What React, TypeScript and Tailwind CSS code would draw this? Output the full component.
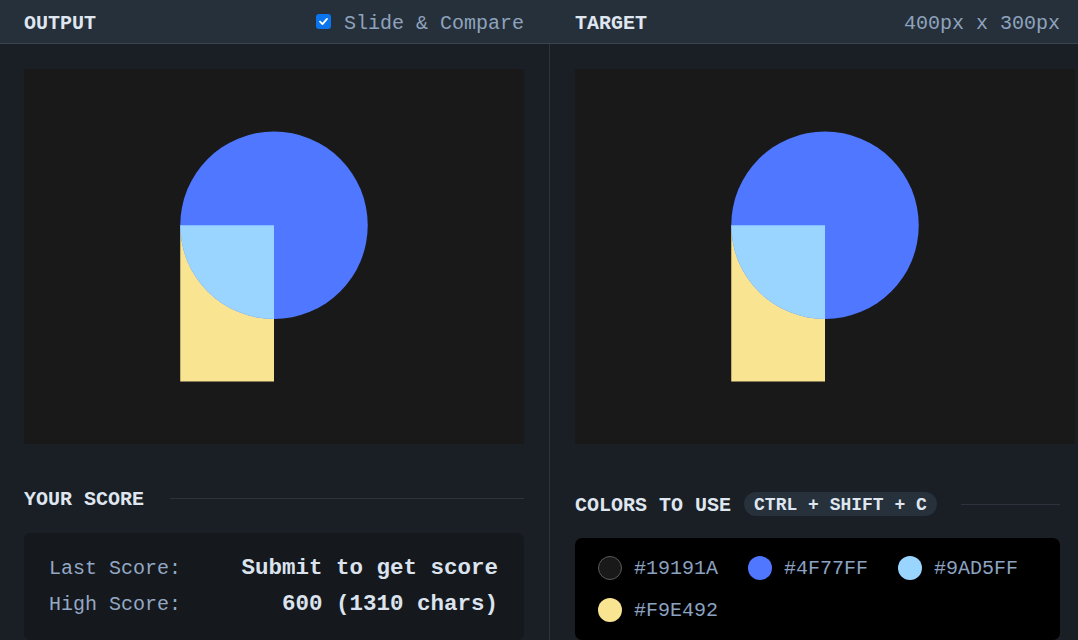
import React from "react";

const mono = { fontFamily: '"Liberation Mono", "DejaVu Sans Mono", monospace' };

function Shapes() {
  return (
    <svg width="500" height="375" viewBox="0 0 400 300" className="block">
      <rect x="0" y="0" width="400" height="300" fill="#19191A" />
      <rect x="125" y="125" width="75" height="125" fill="#F9E492" />
      <circle cx="200" cy="125" r="75" fill="#4F77FF" />
      <path d="M200 125 L125 125 A75 75 0 0 0 200 200 Z" fill="#9AD5FF" />
    </svg>
  );
}

const colors = [
  { hex: "#19191A", border: true },
  { hex: "#4F77FF" },
  { hex: "#9AD5FF" },
  { hex: "#F9E492" },
];

export default function App() {
  return (
    <div className="w-[1078px] h-[640px] overflow-hidden bg-[#1a1e25] flex flex-col" style={mono}>
      <div className="h-[44px] shrink-0 flex bg-[#26303a] border-b border-[#3a4450]">
        <div className="w-[550px] pl-[24px] pr-[26px] flex items-center justify-between">
          <span className="pt-[4px] text-[20px] font-bold text-[#dfe6ef]">OUTPUT</span>
          <div className="flex items-center gap-[13px]">
            <span className="w-[15px] h-[15px] rounded-[3px] bg-[#0b74ef] flex items-center justify-center">
              <svg width="11" height="11" viewBox="0 0 12 12">
                <path d="M2.2 6.2 L4.9 8.8 L9.8 3.2" stroke="white" strokeWidth="2" fill="none" strokeLinecap="round" strokeLinejoin="round" />
              </svg>
            </span>
            <span className="pt-[4px] text-[20px] text-[#8ea3bd]">Slide &amp; Compare</span>
          </div>
        </div>
        <div className="flex-1 pl-[25px] pr-[18px] flex items-center justify-between">
          <span className="pt-[4px] text-[20px] font-bold text-[#dfe6ef]">TARGET</span>
          <span className="pt-[4px] text-[20px] text-[#8ea3bd]">400px x 300px</span>
        </div>
      </div>
      <div className="flex flex-1 min-h-0">
        <div className="w-[549px] shrink-0 pl-[24px] pr-[25px] pt-[25px] flex flex-col">
          <Shapes />
          <div className="mt-[42px] h-[24px] flex items-center gap-[26px]">
            <span className="pt-[4px] text-[20px] font-bold text-[#dfe6ef] whitespace-nowrap">YOUR SCORE</span>
            <div className="flex-1 h-px bg-[#2d343d]" />
          </div>
          <div className="mt-[23px] flex-1 rounded-[7px] bg-[#15181d] pl-[25px] pr-[26px] pt-[18px]">
            <div className="h-[36px] flex items-center justify-between">
              <span className="text-[20px] text-[#93a8c4]">Last Score:</span>
              <span className="text-[22.5px] font-bold text-[#dbe3ee]">Submit to get score</span>
            </div>
            <div className="h-[36px] flex items-center justify-between">
              <span className="text-[20px] text-[#93a8c4]">High Score:</span>
              <span className="text-[22.5px] font-bold text-[#dbe3ee]">600 (1310 chars)</span>
            </div>
          </div>
        </div>
        <div className="w-px shrink-0 bg-[#2c333c]" />
        <div className="flex-1 min-w-0 overflow-hidden pl-[25px] pr-[18px] pt-[25px] flex flex-col">
          <div className="w-[500px] h-[375px] shrink-0">
            <Shapes />
          </div>
          <div className="mt-[48px] h-[24px] flex items-center">
            <span className="pt-[4px] text-[20px] font-bold text-[#dfe6ef] whitespace-nowrap">COLORS TO USE</span>
            <span className="ml-[13px] h-[24px] pt-[2px] px-[10px] rounded-full bg-[#26313b] flex items-center text-[18px] font-bold text-[#dfe6ef] whitespace-nowrap">
              CTRL + SHIFT + C
            </span>
            <div className="ml-[24px] flex-1 h-px bg-[#2d343d]" />
          </div>
          <div className="mt-[22px] flex-1 rounded-[7px] bg-black pl-[23px] pr-[10px] pt-[18px]">
            <div className="flex flex-wrap gap-x-[30px] gap-y-[18px]">
              {colors.map((c) => (
                <div key={c.hex} className="flex items-center gap-[12px] h-[24px]">
                  <span
                    className={
                      c.border
                        ? "w-[24px] h-[24px] rounded-full border border-[#5a5a5a]"
                        : "w-[24px] h-[24px] rounded-full"
                    }
                    style={{ backgroundColor: c.hex }}
                  />
                  <span className="pt-[2px] text-[20px] text-[#8ba2c0]">{c.hex}</span>
                </div>
              ))}
            </div>
          </div>
        </div>
      </div>
    </div>
  );
}
